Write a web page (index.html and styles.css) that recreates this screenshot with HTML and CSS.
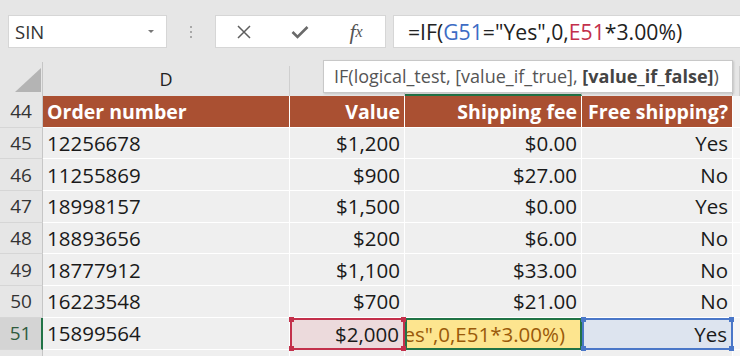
FILE: index.html
```html
<!DOCTYPE html>
<html lang="en">
<head>
    <meta charset="UTF-8">
    <title>Shipping fee formula</title>
    <link rel="stylesheet" href="styles.css">
</head>
<body>
    <!-- Formula bar -->
    <div class="toolbar">
        <div class="namebox">
            <span>SIN</span>
            <span class="caret"></span>
        </div>
        <div class="grip"><i></i><i></i><i></i></div>
        <div class="fbtns">
            <span class="btn"><svg width="16" height="16" viewBox="0 0 16 16"><path d="M2 2 L14 14 M14 2 L2 14" stroke="#5e5e5e" stroke-width="1.5" fill="none"/></svg></span>
            <span class="btn"><svg width="20" height="16" viewBox="0 0 20 16"><path d="M2.5 8 L7.5 13 L17.5 3" stroke="#6a6a6a" stroke-width="2.6" fill="none"/></svg></span>
            <span class="btn fx">f<small>x</small></span>
        </div>
        <div class="formula">=IF(<span class="ref-g">G51</span>="Yes",0,<span class="ref-e">E51</span>*3.00%)</div>
    </div>

    <!-- Sheet -->
    <div class="sheet">
        <div class="row colheads">
            <div class="corner"><span class="tri"></span></div>
            <div class="ch">D</div>
            <div class="ch"></div>
            <div class="ch active"></div>
            <div class="ch"></div>
            <div class="ch"></div>
        </div>

        <div class="row">
            <div class="rh">44</div>
            <div class="c head">Order number</div>
            <div class="c head r">Value</div>
            <div class="c head r">Shipping fee</div>
            <div class="c head r">Free shipping?</div>
            <div class="c blank"></div>
        </div>
        <div class="row">
            <div class="rh">45</div>
            <div class="c">12256678</div>
            <div class="c r">$1,200</div>
            <div class="c r">$0.00</div>
            <div class="c r">Yes</div>
            <div class="c blank"></div>
        </div>
        <div class="row">
            <div class="rh">46</div>
            <div class="c">11255869</div>
            <div class="c r">$900</div>
            <div class="c r">$27.00</div>
            <div class="c r">No</div>
            <div class="c blank"></div>
        </div>
        <div class="row">
            <div class="rh">47</div>
            <div class="c">18998157</div>
            <div class="c r">$1,500</div>
            <div class="c r">$0.00</div>
            <div class="c r">Yes</div>
            <div class="c blank"></div>
        </div>
        <div class="row">
            <div class="rh">48</div>
            <div class="c">18893656</div>
            <div class="c r">$200</div>
            <div class="c r">$6.00</div>
            <div class="c r">No</div>
            <div class="c blank"></div>
        </div>
        <div class="row">
            <div class="rh">49</div>
            <div class="c">18777912</div>
            <div class="c r">$1,100</div>
            <div class="c r">$33.00</div>
            <div class="c r">No</div>
            <div class="c blank"></div>
        </div>
        <div class="row">
            <div class="rh">50</div>
            <div class="c">16223548</div>
            <div class="c r">$700</div>
            <div class="c r">$21.00</div>
            <div class="c r">No</div>
            <div class="c blank"></div>
        </div>
        <div class="row">
            <div class="rh current">51</div>
            <div class="c">15899564</div>
            <div class="c r ref red">$2,000<i class="h tl"></i><i class="h tr"></i><i class="h bl"></i><i class="h br"></i></div>
            <div class="c editing"><span>es",0,E51*3.00%)</span></div>
            <div class="c r ref blue">Yes<i class="h tl"></i><i class="h tr"></i><i class="h bl"></i><i class="h br"></i></div>
            <div class="c blank"></div>
        </div>
        <div class="row">
            <div class="rh"></div>
            <div class="c"></div>
            <div class="c"></div>
            <div class="c"></div>
            <div class="c"></div>
            <div class="c blank"></div>
        </div>

        <div class="tip">IF(logical_test, [value_if_true], <b>[value_if_false]</b>)</div>
    </div>
</body>
</html>
```

FILE: styles.css
```css
* { box-sizing: border-box; margin: 0; padding: 0; }
body { font-family: 'Open Sans', sans-serif; background: #e6e6e6; color: #222; width: 740px; height: 356px; overflow: hidden; }

/* formula bar */
.toolbar { display: flex; align-items: flex-start; height: 62px; padding-top: 15px; }
.namebox { width: 159px; height: 33px; margin-left: 8px; background: #fff; border: 1px solid #d6d6d6; display: flex; align-items: center; justify-content: space-between; padding: 0 12px 0 6px; font-size: 18.5px; color: #333; }
.caret { width: 0; height: 0; border-left: 3.5px solid transparent; border-right: 3.5px solid transparent; border-top: 3.5px solid #777; }
.grip { width: 48px; height: 33px; display: flex; flex-direction: column; align-items: center; justify-content: center; gap: 3px; }
.grip i { width: 2px; height: 2px; background: #a8a8a8; }
.fbtns { width: 171px; height: 33px; background: #fff; border: 1px solid #d6d6d6; display: flex; align-items: center; }
.btn { width: 56px; display: flex; justify-content: center; align-items: center; }
.fx { font-family: 'Liberation Serif', serif; font-style: italic; font-size: 22px; color: #555; line-height: 1; }
.fx small { font-size: 16px; }
.formula { flex: 1; height: 33px; margin-left: 7px; background: #fff; border: 1px solid #d6d6d6; border-right: none; padding-left: 14px; font-size: 21.2px; line-height: 31px; color: #222; white-space: nowrap; }
.ref-g { color: #3d6cc4; }
.ref-e { color: #c3304b; }

/* sheet */
.sheet { position: relative; }
.row { display: grid; grid-template-columns: 43px 247px 115px 177px 151px 1fr; height: 31.7px; }
.colheads { height: 34px; }
.corner { display: flex; align-items: flex-end; justify-content: flex-end; padding: 0 1px 4px 0; border-right: 1px solid #c6c6c6; }
.tri { width: 0; height: 0; border-left: 26px solid transparent; border-bottom: 24px solid #b4b4b4; }
.ch { display: flex; align-items: center; justify-content: center; font-size: 18px; color: #222; border-right: 1px solid #cfcfcf; margin-top: 4px; padding-bottom: 4px; }
.ch.active { border-bottom: 2px solid #217346; }

.rh { display: flex; align-items: center; justify-content: center; font-size: 19px; color: #333; background: #e6e6e6; border-right: 1px solid #c6c6c6; border-bottom: 1px solid #d6d6d6; }
.rh.current { background: #d4d4d4; color: #2f5a3d; border-right: 2px solid #217346; }
.c { display: flex; align-items: center; padding: 0 4px; font-size: 20.5px; color: #1a1a1a; background: #efefef; border-right: 1px solid #fff; border-bottom: 1.5px solid #fff; white-space: nowrap; overflow: hidden; }
.c.r { justify-content: flex-end; }
.c.blank { background: #f7f7f7; }
.c.head { background: #aa5032; color: #fff; font-weight: 700; font-size: 19.5px; }

/* row 51 references */
.c.ref { position: relative; overflow: visible; }
.c.red { background: #ecdadc; border: 2px solid #c3304b; }
.c.blue { background: #dde4ef; border: 2px solid #4a77c8; }
.h { position: absolute; width: 5px; height: 5px; }
.red .h { background: #c3304b; }
.blue .h { background: #4a77c8; }
.tl { left: -3px; top: -3px; }
.tr { right: -3px; top: -3px; }
.bl { left: -3px; bottom: -3px; }
.br { right: -3px; bottom: -3px; }
.c.editing { background: #fde58f; border: 2px solid #217346; justify-content: flex-end; padding-right: 15px; color: #9a5a0a; }

/* function tooltip */
.tip { position: absolute; left: 323px; top: -2px; width: 410px; height: 33px; background: #fff; border: 1px solid #c8c8c8; box-shadow: 1px 1px 2px rgba(0, 0, 0, 0.15); padding-left: 10px; font-size: 18px; line-height: 31px; color: #555; white-space: nowrap; }
.tip b { color: #444; }
```
